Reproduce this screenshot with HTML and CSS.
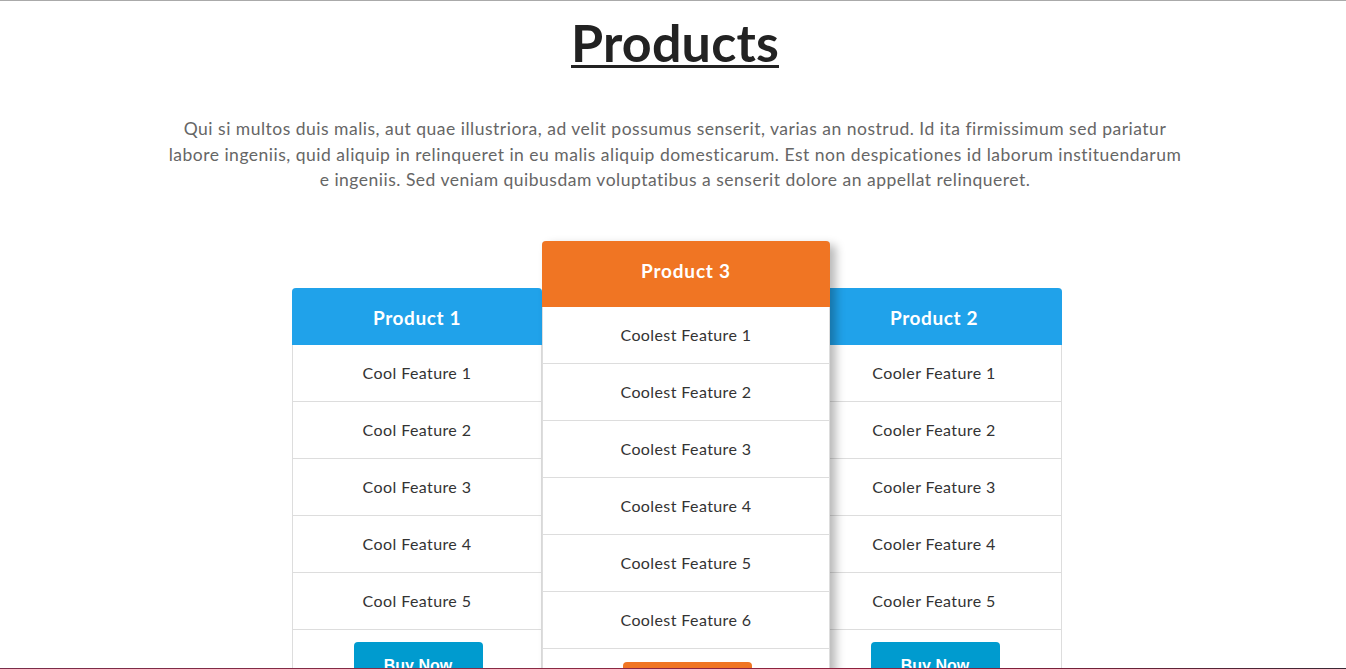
FILE: index.html
```html
<!DOCTYPE html>
<html lang="en">
<head>
<meta charset="utf-8">
<title>Products</title>
<link rel="stylesheet" href="styles.css">
</head>
<body>
<section class="products">
  <h1 class="title">Products</h1>
  <p class="intro">Qui si multos duis malis, aut quae illustriora, ad velit possumus senserit, varias an nostrud. Id ita firmissimum sed pariatur labore ingeniis, quid aliquip in relinqueret in eu malis aliquip domesticarum. Est non despicationes id laborum instituendarum e ingeniis. Sed veniam quibusdam voluptatibus a senserit dolore an appellat relinqueret.</p>
  <div class="cards">
    <div class="card card-side card-first">
      <div class="card-head">Product 1</div>
      <ul class="features">
        <li>Cool Feature 1</li>
        <li>Cool Feature 2</li>
        <li>Cool Feature 3</li>
        <li>Cool Feature 4</li>
        <li>Cool Feature 5</li>
      </ul>
      <div class="card-foot"><button class="buy">Buy Now</button></div>
    </div>
    <div class="card card-featured">
      <div class="card-head">Product 3</div>
      <ul class="features">
        <li>Coolest Feature 1</li>
        <li>Coolest Feature 2</li>
        <li>Coolest Feature 3</li>
        <li>Coolest Feature 4</li>
        <li>Coolest Feature 5</li>
        <li>Coolest Feature 6</li>
      </ul>
      <div class="card-foot"><button class="buy">Buy Now</button></div>
    </div>
    <div class="card card-side card-last">
      <div class="card-head">Product 2</div>
      <ul class="features">
        <li>Cooler Feature 1</li>
        <li>Cooler Feature 2</li>
        <li>Cooler Feature 3</li>
        <li>Cooler Feature 4</li>
        <li>Cooler Feature 5</li>
      </ul>
      <div class="card-foot"><button class="buy">Buy Now</button></div>
    </div>
  </div>
</section>
<section class="next-band"></section>
</body>
</html>
```

FILE: styles.css
```css
html, body {
  margin: 0;
  padding: 0;
  background: #ffffff;
}

body {
  font-family: Lato, "Open Sans", sans-serif;
  color: #333333;
}

.products {
  height: 667px;
  overflow: hidden;
  border-top: 1px solid #aaaaaa;
  padding-left: 4px;
  display: flex;
  flex-direction: column;
  align-items: center;
}

.title {
  margin: 10px 0 0;
  font-size: 52px;
  line-height: 1.2;
  font-weight: 700;
  color: #222222;
  text-decoration: underline;
  text-decoration-thickness: 3px;
  text-underline-offset: 3px;
  letter-spacing: 0.2px;
}

.intro {
  margin: 43px 0 0;
  max-width: 1014px;
  text-align: center;
  font-size: 17.5px;
  letter-spacing: 0.5px;
  line-height: 25.5px;
  color: #666666;
  font-weight: 400;
}

.cards {
  margin-top: 48px;
  display: flex;
  align-items: flex-start;
  padding-left: 4px;
}

.card {
  background: #ffffff;
  border: 1px solid #dddddd;
  border-top: none;
  border-radius: 4px 4px 0 0;
}

.card-first {
  width: 248px;
  margin-top: 47px;
}

.card-last {
  width: 254px;
  margin-top: 47px;
  margin-left: -24px;
}

.card-featured {
  width: 286px;
  position: relative;
  z-index: 2;
  box-shadow: 6px 4px 10px rgba(0, 0, 0, 0.28);
}

.card-head {
  height: 57px;
  box-sizing: border-box;
  padding-top: 3px;
  display: flex;
  align-items: center;
  justify-content: center;
  background: #20a2ea;
  color: #ffffff;
  font-weight: 700;
  font-size: 19px;
  letter-spacing: 0.6px;
  border-radius: 4px 4px 0 0;
  margin: 0 -1px;
}

.card-featured .card-head {
  height: 66px;
  padding-top: 0;
  padding-bottom: 6px;
  background: #f07523;
  font-size: 19px;
  letter-spacing: 0.8px;
}

.features {
  list-style: none;
  margin: 0;
  padding: 0;
}

.features li {
  height: 56px;
  border-bottom: 1px solid #dddddd;
  display: flex;
  align-items: center;
  justify-content: center;
  font-size: 16px;
  letter-spacing: 0.4px;
  color: #333333;
}

.card-foot {
  padding: 12px 0 20px 2px;
  display: flex;
  justify-content: center;
}

.card-featured .card-foot {
  padding-top: 13px;
}

.buy {
  width: 129px;
  height: 48px;
  border: none;
  border-radius: 4px;
  background: #009bcf;
  color: #ffffff;
  font-family: "Liberation Sans", Arial, sans-serif;
  font-weight: 700;
  font-size: 16px;
  padding: 0;
}

.card-featured .buy {
  background: #f07523;
}

.next-band {
  height: 40px;
  background: linear-gradient(90deg, #7a2d4a 0%, #8a2a44 40%, #8f1e3c 70%, #3a2834 100%);
}
```
